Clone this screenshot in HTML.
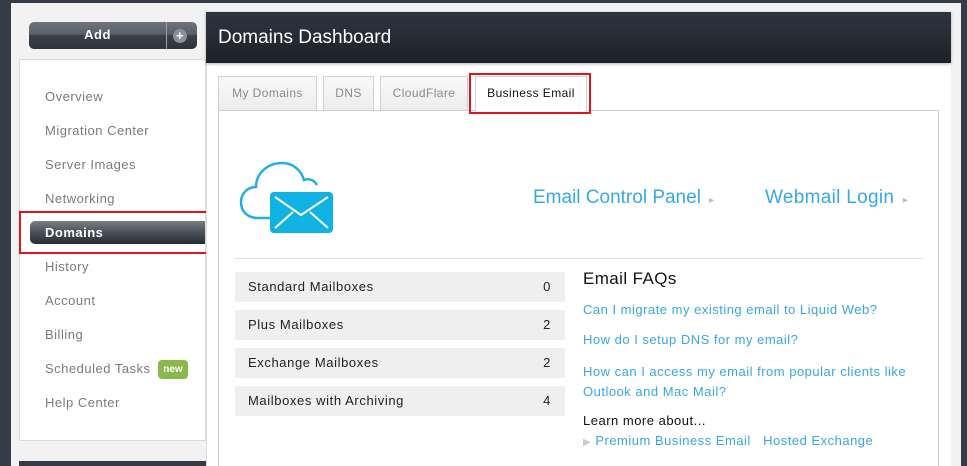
<!DOCTYPE html>
<html style="width:967px;height:466px;overflow:hidden"><head><style>
*{margin:0;padding:0;box-sizing:border-box}
body{width:967px;height:466px;overflow:hidden;background:#353c45;font-family:"Liberation Sans",Arial,sans-serif;position:relative}
.frame{position:absolute;left:11px;top:3px;width:950px;height:463px;background:#f2f2f2}
.abs{position:absolute}
.add{left:29px;top:22px;width:168px;height:27px;border-radius:5px;background:linear-gradient(#6e747c 0,#5a6068 45%,#3a4049 50%,#2e343c 100%);color:#fff;font-weight:bold;font-size:13px;letter-spacing:.5px}
.side{left:19px;top:59px;width:187px;height:382px;background:#fff;border:1px solid #dcdcdc}
.nav{position:absolute;left:45px;font-size:13px;color:#7a7a7a;letter-spacing:.5px}
.hdr{left:206px;top:12px;width:745px;height:51px;background:linear-gradient(#2f3540,#1d2128);color:#fff;font-size:19px;box-shadow:0 1px 3px rgba(0,0,0,.3)}
.main{left:206px;top:63px;width:745px;height:403px;background:#fff;border-left:1px solid #ddd}
.tab{position:absolute;top:76px;height:34px;border:1px solid #d2d2d2;border-bottom:none;background:linear-gradient(#fafafa,#ececec);font-size:12px;color:#8a8a8a;text-align:center;line-height:33px;letter-spacing:.4px}
.box{left:218px;top:110px;width:721px;height:356px;border:1px solid #cfcfcf;border-bottom:none;background:#fff}
.row{position:absolute;left:235px;width:330px;height:30px;background:#efefef;font-size:13px;color:#222;line-height:30px;padding-left:13px;letter-spacing:.6px}
.row span{position:absolute;right:14px}
.lk{position:absolute;left:583px;font-size:13px;color:#3aa6e0;letter-spacing:.5px}
.red{position:absolute;border:2px solid #e1141e}
</style></head><body>
<div class="frame"></div>
<div class="abs add"><div class="abs" style="left:0;width:137px;top:5px;text-align:center">Add</div><div class="abs" style="left:137px;top:0;width:1px;height:27px;background:#9aa0a6"></div><div class="abs" style="left:144px;top:7px;width:14px;height:14px;border-radius:50%;background:#8b9096;color:#fff;font-size:13px;line-height:13px;text-align:center">+</div></div>
<div class="abs side"></div>
<div class="nav" style="top:89px">Overview</div>
<div class="nav" style="top:123px">Migration Center</div>
<div class="nav" style="top:157px">Server Images</div>
<div class="nav" style="top:191px">Networking</div>
<div class="abs" style="left:30px;top:221px;width:175px;height:23px;border-radius:5px 0 0 5px;background:linear-gradient(#7a7f86,#4a5058 50%,#262b32);"></div>
<div class="nav" style="top:225px;color:#fff;font-weight:bold">Domains</div>
<div class="red" style="left:19px;top:211px;width:195px;height:43px"></div>
<div class="nav" style="top:259px">History</div>
<div class="nav" style="top:293px">Account</div>
<div class="nav" style="top:327px">Billing</div>
<div class="nav" style="top:361px">Scheduled Tasks</div>
<div class="abs" style="left:158px;top:360px;width:30px;height:19px;border-radius:4px;background:#8bb84a;color:#fff;font-size:10px;font-weight:bold;text-align:center;line-height:19px">new</div>
<div class="nav" style="top:395px">Help Center</div>
<div class="abs" style="left:19px;top:461px;width:187px;height:5px;background:#353c45"></div>
<div class="abs main"></div>
<div class="abs hdr"><div class="abs" style="left:12px;top:15px">Domains Dashboard</div></div>
<div class="tab" style="left:218px;width:99px">My Domains</div>
<div class="tab" style="left:323px;width:51px">DNS</div>
<div class="tab" style="left:380px;width:88px">CloudFlare</div>
<div class="tab" style="left:475px;width:112px;background:#fff;color:#111;height:35px;z-index:2">Business Email</div>
<div class="abs box"></div>
<div class="red" style="left:469px;top:73px;width:122px;height:41px;z-index:3"></div>
<svg class="abs" style="left:230px;top:150px" width="110" height="90" viewBox="0 0 110 90">
<path d="M42 68 H28 C17 68 11 61 11 52 C11 43 18 37 26 37 C26 23 38 13 52 13 C63 13 71 20 74 30 C79 28 84 30 87 35" fill="none" stroke="#25aee0" stroke-width="2.5"/>
<rect x="40" y="42" width="63" height="41" rx="4" fill="#0fb2e2"/>
<path d="M45 47 L71 65 L98 47 M45 78 L63 62 M98 78 L80 62" fill="none" stroke="#fff" stroke-width="2"/>
</svg>
<div class="abs" style="left:533px;top:187px;font-size:19px;color:#35a9e2">Email Control Panel <span style="font-size:10px;color:#bbb">&nbsp;▸</span></div>
<div class="abs" style="left:765px;top:187px;font-size:19px;color:#35a9e2;letter-spacing:.3px">Webmail Login <span style="font-size:10px;color:#bbb">&nbsp;▸</span></div>
<div class="abs" style="left:234px;top:258px;width:689px;height:1px;background:#e2e2e2"></div>
<div class="row" style="top:272px">Standard Mailboxes<span>0</span></div>
<div class="row" style="top:310px">Plus Mailboxes<span>2</span></div>
<div class="row" style="top:348px">Exchange Mailboxes<span>2</span></div>
<div class="row" style="top:386px">Mailboxes with Archiving<span>4</span></div>
<div class="abs" style="left:583px;top:269px;font-size:17px;color:#111;letter-spacing:.4px">Email FAQs</div>
<div class="lk" style="top:302px">Can I migrate my existing email to Liquid Web?</div>
<div class="lk" style="top:332px">How do I setup DNS for my email?</div>
<div class="lk" style="top:362px;line-height:20px">How can I access my email from popular clients like<br>Outlook and Mac Mail?</div>
<div class="abs" style="left:583px;top:413px;font-size:13px;color:#111;letter-spacing:.5px">Learn more about...</div>
<div class="lk" style="top:433px"><span style="color:#ccc;font-size:10px">▶</span> Premium Business Email &nbsp;&nbsp;Hosted Exchange</div>
</body></html>
